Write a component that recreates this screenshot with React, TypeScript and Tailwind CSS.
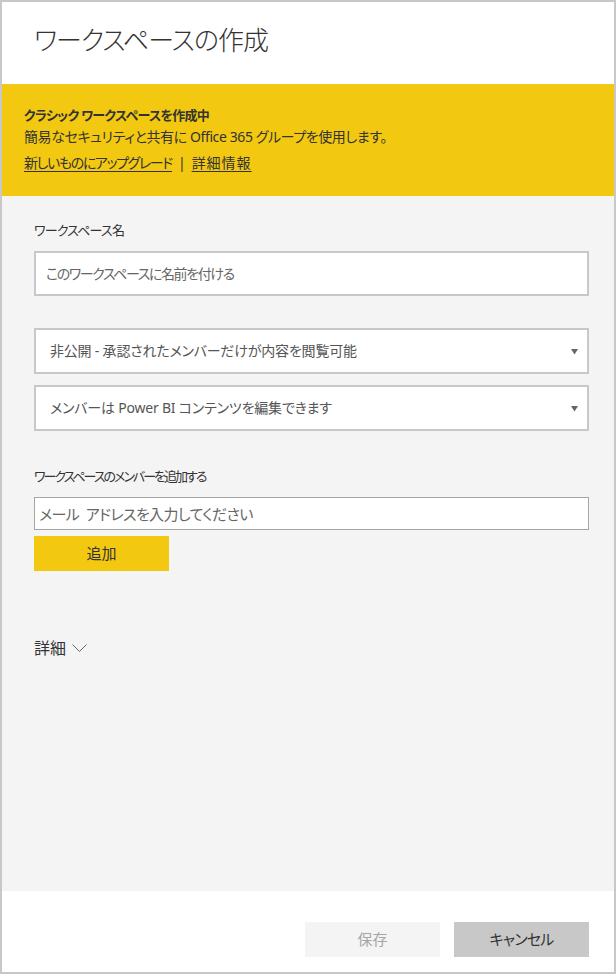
const font = "[font-family:'Noto_Sans','Noto_Sans_CJK_JP',sans-serif] [font-feature-settings:'palt']";

function Caret() {
  return (
    <svg width="7" height="7" viewBox="0 0 7 7" className="shrink-0">
      <path d="M0 1h7L3.5 6.5z" fill="#666" />
    </svg>
  );
}

function Select({ label }: { label: string }) {
  return (
    <div className="flex h-[46px] items-center justify-between border-2 border-[#c8c8c8] bg-white pl-[14px] pr-[9px]">
      <span className="text-[14px] leading-5 tracking-[-0.2px] text-[#555]">{label}</span>
      <Caret />
    </div>
  );
}

export default function App() {
  return (
    <div className={`${font} flex h-[974px] w-[616px] flex-col border-2 border-[#c8c8c8] text-[#333]`}>
      <div className="h-[82px] bg-white pl-[32px] pt-[20px]">
        <h1 className="text-[26px] font-light leading-[36px] tracking-[-1px] text-[#333]">ワークスペースの作成</h1>
      </div>

      <div className="h-[112px] bg-[#f2c811] pl-[22px] pt-[21px] text-[#333]">
        <div className="text-[13px] font-bold leading-5 tracking-[-0.7px]">クラシック ワークスペースを作成中</div>
        <div className="mt-[2px] text-[14px] leading-5 tracking-[-0.4px]">簡易なセキュリティと共有に Office 365 グループを使用します。</div>
        <div className="mt-[6px] flex items-center gap-[6px] text-[14px] leading-5">
          <a className="tracking-[-1.4px] underline decoration-[#333] underline-offset-[3px]">新しいものにアップグレード</a>
          <span>|</span>
          <a className="tracking-[1px] underline decoration-[#333] underline-offset-[3px]">詳細情報</a>
        </div>
      </div>

      <div className="flex flex-1 flex-col bg-[#f4f4f4] pl-[32px] pr-[25px] pt-[24px]">
        <label className="text-[13px] leading-5 tracking-[-0.8px] text-[#333]">ワークスペース名</label>
        <div className="mt-[11px] flex h-[45px] items-center border-2 border-[#c8c8c8] bg-white pl-[10px]">
          <span className="text-[14px] leading-5 tracking-[-1.4px] text-[#666]">このワークスペースに名前を付ける</span>
        </div>

        <div className="mt-[32px]">
          <Select label="非公開 - 承認されたメンバーだけが内容を閲覧可能" />
        </div>
        <div className="mt-[11px]">
          <Select label="メンバーは Power BI コンテンツを編集できます" />
        </div>

        <label className="mt-[35px] text-[13px] leading-5 tracking-[-2px] text-[#333]">ワークスペースのメンバーを追加する</label>
        <div className="mt-[11px] flex h-[33px] items-center border border-[#a6a6a6] bg-white pl-[4px]">
          <span className="text-[15px] leading-5 tracking-[-0.6px] text-[#666]">メール&nbsp;&nbsp;アドレスを入力してください</span>
        </div>
        <button className="mt-[6px] h-[35px] w-[135px] bg-[#f2c811] text-[15px] text-[#333]">追加</button>

        <div className="mt-[67px] flex items-center gap-[6px] leading-5">
          <span className="text-[16px] text-[#333]">詳細</span>
          <svg width="15" height="8" viewBox="0 0 15 8">
            <path d="M0.5 0.5l7 7 7-7" fill="none" stroke="#666" strokeWidth="1" />
          </svg>
        </div>
      </div>

      <div className="flex h-[81px] justify-end gap-[14px] bg-white pr-[25px] pt-[31px]">
        <button className="h-[35px] w-[135px] bg-[#f4f4f4] text-[15px] text-[#a6a6a6]">保存</button>
        <button className="h-[35px] w-[135px] bg-[#c8c8c8] text-[15px] tracking-[-0.8px] text-[#333]">キャンセル</button>
      </div>
    </div>
  );
}
